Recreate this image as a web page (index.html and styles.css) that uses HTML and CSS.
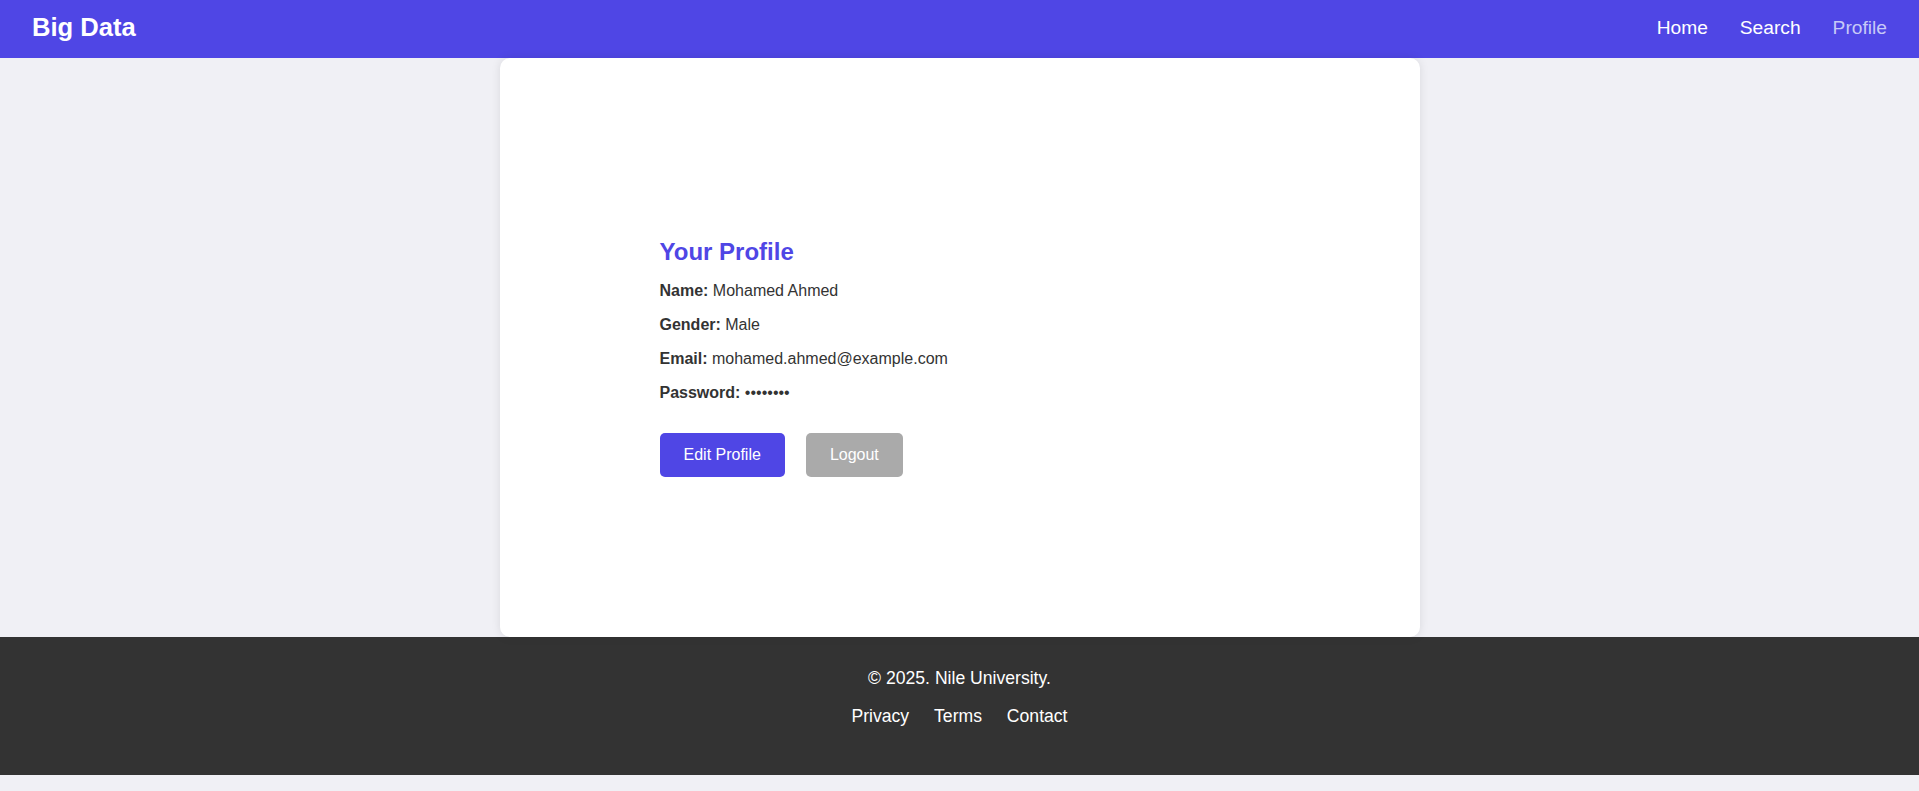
FILE: index.html
```html
<!DOCTYPE html>
<html lang="en">
<head>
<meta charset="utf-8">
<title>Big Data - Profile</title>
<link rel="stylesheet" href="styles.css">
</head>
<body>
<header class="topbar">
  <div class="logo">Big Data</div>
  <nav class="nav">
    <a href="#" class="nav-link">Home</a>
    <a href="#" class="nav-link">Search</a>
    <a href="#" class="nav-link active">Profile</a>
  </nav>
</header>
<main class="main">
  <section class="card">
    <div class="profile">
      <h2 class="title">Your Profile</h2>
      <p class="row"><strong>Name:</strong> Mohamed Ahmed</p>
      <p class="row"><strong>Gender:</strong> Male</p>
      <p class="row"><strong>Email:</strong> mohamed.ahmed@example.com</p>
      <p class="row last"><strong>Password:</strong> ••••••••</p>
      <div class="actions">
        <button class="btn btn-primary">Edit Profile</button>
        <button class="btn btn-muted">Logout</button>
      </div>
    </div>
  </section>
</main>
<footer class="footer">
  <p class="copy">© 2025. Nile University.</p>
  <div class="links">
    <a href="#" class="foot-link">Privacy</a>
    <a href="#" class="foot-link">Terms</a>
    <a href="#" class="foot-link">Contact</a>
  </div>
</footer>
</body>
</html>
```
FILE: styles.css
```css
* { box-sizing: border-box; }
html, body {
  margin: 0;
  padding: 0;
}
body {
  background: #f0f0f5;
  font-family: "Liberation Sans", Arial, sans-serif;
  color: #333;
}
.topbar {
  height: 58px;
  background: #4f46e5;
  display: flex;
  align-items: center;
  justify-content: space-between;
  padding: 0 32px 3px 32px;
}
.logo {
  color: #fff;
  font-size: 25.6px;
  font-weight: bold;
}
.nav {
  display: flex;
  gap: 32px;
}
.nav-link {
  color: #fff;
  text-decoration: none;
  font-size: 19.2px;
}
.nav-link.active {
  color: #c7c9f7;
}
.main {
  display: flex;
  justify-content: center;
}
.card {
  width: 920px;
  height: 579px;
  background: #fff;
  border-radius: 10px;
  box-shadow: 0 0 10px rgba(0, 0, 0, 0.1);
  display: flex;
  flex-direction: column;
  justify-content: center;
  padding: 0 160px 0 160px;
}
.profile {
  padding-top: 20px;
}
.title {
  margin: 0 0 16px 0;
  color: #4f46e5;
  font-size: 24px;
  font-weight: bold;
}
.row {
  margin: 0 0 16px 0;
  font-size: 16px;
}
.row.last {
  margin-bottom: 0;
}
.actions {
  margin-top: 31px;
  display: flex;
  gap: 21px;
}
.btn {
  font-family: "Liberation Sans", Arial, sans-serif;
  font-size: 16px;
  color: #fff;
  border: none;
  border-radius: 5px;
  height: 44px;
  padding: 0 24px;
  cursor: pointer;
}
.btn-primary { background: #4f46e5; }
.btn-muted { background: #aaaaaa; }
.footer {
  background: #333;
  color: #fff;
  text-align: center;
  height: 138px;
  padding-top: 31px;
  font-size: 17.6px;
}
.copy {
  margin: 0 0 17px 0;
}
.links {
  margin: 0;
}
.foot-link {
  color: #fff;
  text-decoration: none;
  margin: 0 10px;
}
```
